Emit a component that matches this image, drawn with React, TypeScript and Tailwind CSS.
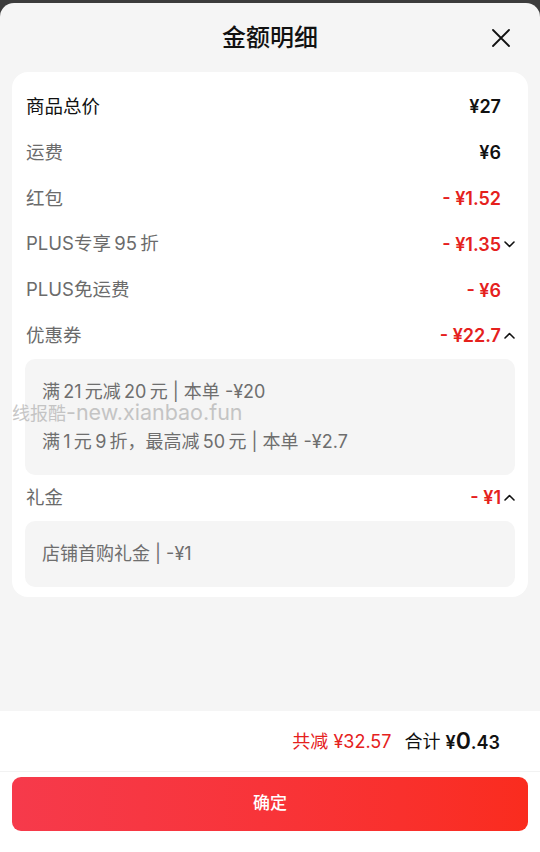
import React from 'react';

type Row = {
  label: string;
  value: string;
  red?: boolean;
  strong?: boolean;
  chevron?: 'up' | 'down';
  details?: string[];
};

// thin space, the app spaces digits away from CJK characters
const t = '\u2009';

const rows: Row[] = [
  { label: '商品总价', value: '¥27', strong: true },
  { label: '运费', value: '¥6' },
  { label: '红包', value: '- ¥1.52', red: true },
  { label: `PLUS专享${t}95${t}折`, value: '- ¥1.35', red: true, chevron: 'down' },
  { label: 'PLUS免运费', value: '- ¥6', red: true },
  {
    label: '优惠券',
    value: '- ¥22.7',
    red: true,
    chevron: 'up',
    details: [
      `满${t}21${t}元减${t}20${t}元 | 本单 -¥20`,
      `满${t}1${t}元${t}9${t}折，最高减${t}50${t}元 | 本单 -¥2.7`,
    ],
  },
  { label: '礼金', value: '- ¥1', red: true, chevron: 'up', details: ['店铺首购礼金 | -¥1'] },
];

const Chevron = ({ dir }: { dir: 'up' | 'down' }) => (
  <svg width="11" height="7" viewBox="0 0 11 7" fill="none">
    <path
      d={dir === 'down' ? 'M1 1l4.5 4.5L10 1' : 'M1 6l4.5-4.5L10 6'}
      stroke="#111"
      strokeWidth="1.6"
      strokeLinecap="round"
      strokeLinejoin="round"
    />
  </svg>
);

const App = () => {
  return (
    <div
      className="h-[852px] w-[540px] bg-[#3c3c3c] pt-[3px] relative overflow-hidden"
      style={{ fontFamily: 'Inter, "Noto Sans CJK SC", "Noto Sans", sans-serif' }}
    >
      <div className="h-full flex flex-col bg-[#f5f5f5] rounded-t-[14px] overflow-hidden">
        {/* Header */}
        <div className="h-[69px] relative flex items-center justify-center">
          <h1 className="text-[24px] font-medium text-[#111] leading-none">金额明细</h1>
          <button className="absolute right-[29px] top-[25px]">
            <svg width="20" height="20" viewBox="0 0 20 20" fill="none">
              <path d="M2 2l16 16M18 2L2 18" stroke="#111" strokeWidth="1.8" strokeLinecap="round" />
            </svg>
          </button>
        </div>

        {/* Detail card */}
        <div className="mx-[12px] bg-white rounded-[16px] pt-[12px] pb-[10px] px-[13px]">
          {rows.map((row) => (
            <div key={row.label}>
              <div className="h-[45.8px] flex items-center pl-[1px]">
                <span
                  className={`text-[18.5px] ${row.strong ? 'text-[#111]' : 'text-[#6b6b6b]'}`}
                >
                  {row.label}
                </span>
                <span
                  className={`ml-auto text-[18px] font-semibold ${row.red ? 'text-[#e5211d]' : 'text-[#111]'}`}
                >
                  {row.value}
                </span>
                <span className="w-[14px] flex justify-end">
                  {row.chevron && <Chevron dir={row.chevron} />}
                </span>
              </div>
              {row.details && (
                <div className="bg-[#f5f5f5] rounded-[10px] px-[17px] py-[20px] flex flex-col gap-[24px]">
                  {row.details.map((d) => (
                    <p key={d} className="h-[26px] leading-[26px] text-[18px] text-[#6e6e6e]">
                      {d}
                    </p>
                  ))}
                </div>
              )}
            </div>
          ))}
        </div>

        <div className="flex-1" />

        {/* Footer */}
        <div className="bg-white">
          <div className="h-[61px] flex items-center justify-end pr-[40px] border-b border-[#f2f2f2]">
            <span className="text-[18px] text-[#e5211d]">共减 ¥32.57</span>
            <span className="ml-[13px] text-[18px] text-[#111]">合计</span>
            <span className="ml-[5px] text-[18px] text-[#111] font-semibold">
              ¥<span className="text-[23px]">0</span>.43
            </span>
          </div>
          <div className="px-[12px] pt-[5px] pb-[21px]">
            <button className="w-full h-[54px] rounded-[9px] bg-gradient-to-r from-[#f63a4b] to-[#fa2c1e] text-white text-[17px] font-medium">
              确定
            </button>
          </div>
        </div>
      </div>

      {/* Watermark */}
      <div className="absolute left-[12px] top-[396px] flex items-baseline text-[#b9b9b9] opacity-80 pointer-events-none">
        <span className="text-[18px]">线报酷</span>
        <span className="text-[21.5px]">-new.xianbao.fun</span>
      </div>
    </div>
  );
};

export default App;
